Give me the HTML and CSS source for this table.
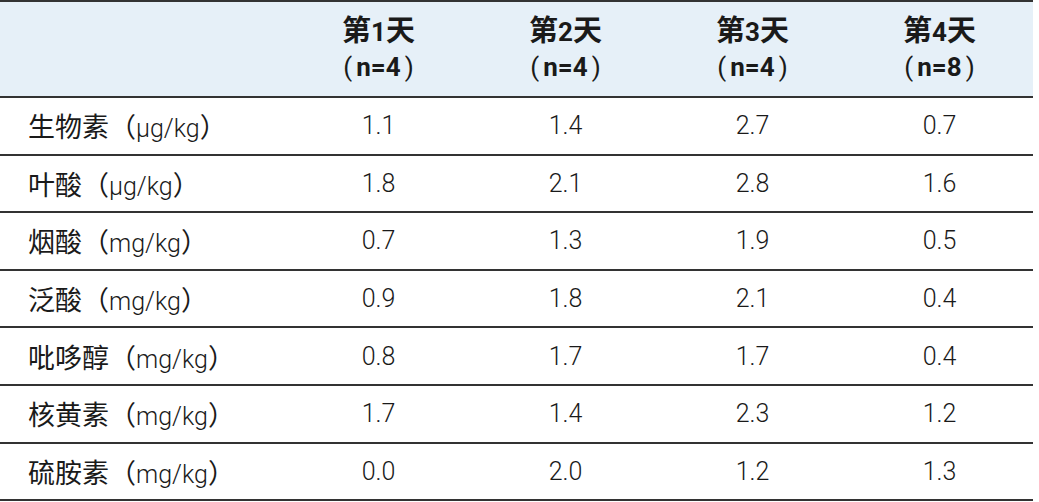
FILE: index.html
```html
<!DOCTYPE html>
<html lang="zh">
<head>
<meta charset="utf-8">
<link rel="stylesheet" href="styles.css">
</head>
<body>
<table class="tbl">
  <colgroup>
    <col class="c-label"><col class="c-val"><col class="c-val"><col class="c-val"><col class="c-val">
  </colgroup>
  <thead>
    <tr>
      <th></th>
      <th><span class="cj">第</span>1<span class="cj">天</span><br><span class="pr">(</span>n=4<span class="pr">)</span></th>
      <th><span class="cj">第</span>2<span class="cj">天</span><br><span class="pr">(</span>n=4<span class="pr">)</span></th>
      <th><span class="cj">第</span>3<span class="cj">天</span><br><span class="pr">(</span>n=4<span class="pr">)</span></th>
      <th><span class="cj">第</span>4<span class="cj">天</span><br><span class="pr">(</span>n=8<span class="pr">)</span></th>
    </tr>
  </thead>
  <tbody>
    <tr><td><span class="cj">生物素（</span>μg/kg<span class="cj">）</span></td><td>1.1</td><td>1.4</td><td>2.7</td><td>0.7</td></tr>
    <tr><td><span class="cj">叶酸（</span>μg/kg<span class="cj">）</span></td><td>1.8</td><td>2.1</td><td>2.8</td><td>1.6</td></tr>
    <tr><td><span class="cj">烟酸（</span>mg/kg<span class="cj">）</span></td><td>0.7</td><td>1.3</td><td>1.9</td><td>0.5</td></tr>
    <tr><td><span class="cj">泛酸（</span>mg/kg<span class="cj">）</span></td><td>0.9</td><td>1.8</td><td>2.1</td><td>0.4</td></tr>
    <tr><td><span class="cj">吡哆醇（</span>mg/kg<span class="cj">）</span></td><td>0.8</td><td>1.7</td><td>1.7</td><td>0.4</td></tr>
    <tr><td><span class="cj">核黄素（</span>mg/kg<span class="cj">）</span></td><td>1.7</td><td>1.4</td><td>2.3</td><td>1.2</td></tr>
    <tr><td><span class="cj">硫胺素（</span>mg/kg<span class="cj">）</span></td><td>0.0</td><td>2.0</td><td>1.2</td><td>1.3</td></tr>
  </tbody>
</table>
</body>
</html>
```

FILE: styles.css
```css
html, body {
  margin: 0;
  padding: 0;
  background: #ffffff;
}
body {
  font-family: Roboto, "Noto Sans CJK SC", sans-serif;
  color: #1a1a1a;
}
.tbl {
  margin-top: 0;
  width: 1033px;
  border-collapse: collapse;
  table-layout: fixed;
  border-top: 2px solid #333;
}
.c-label { width: 285px; }
.c-val { width: 187px; }
.tbl thead tr {
  background: #e6f0f8;
}
.tbl th {
  height: 94px;
  padding: 0;
  font-weight: 700;
  font-size: 26px;
  line-height: 35px;
  text-align: center;
  vertical-align: middle;
  border-bottom: 2px solid #333;
}
.tbl th .cj {
  font-size: 29px;
}
.tbl th .pr {
  font-weight: 400;
  font-size: 26px;
  padding: 0 4px;
}
.tbl td {
  height: 55.6px;
  padding: 0;
  font-size: 25px;
  font-weight: 300;
  text-align: center;
  vertical-align: middle;
  border-bottom: 2px solid #333;
}
.tbl td:first-child {
  text-align: left;
  padding-left: 28px;
}
.tbl td .cj {
  font-size: 27px;
  font-weight: 400;
}
```
